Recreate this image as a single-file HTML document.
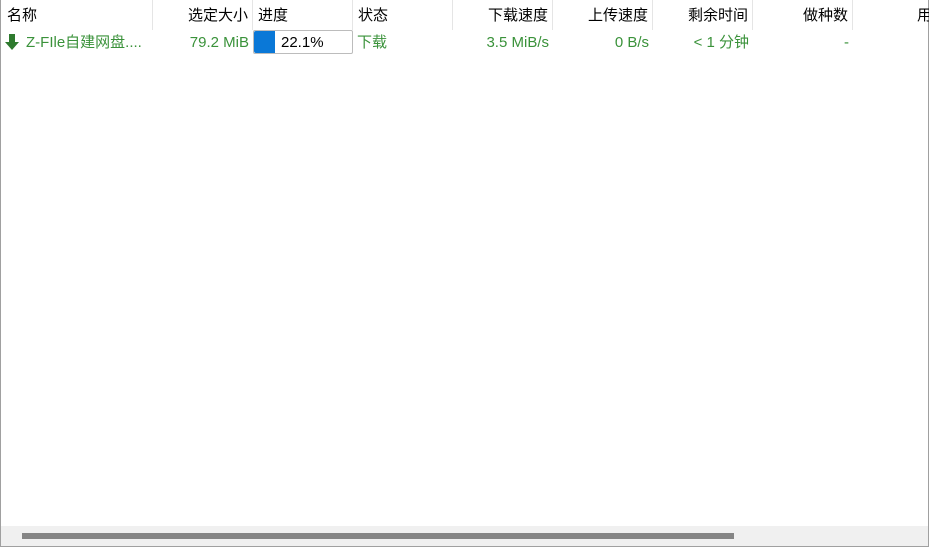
<!DOCTYPE html>
<html><head><meta charset="utf-8"><style>
*{margin:0;padding:0;box-sizing:border-box}
body{width:929px;height:547px;background:#fff;position:relative;overflow:hidden;font-family:"Liberation Sans","Noto Sans CJK SC",sans-serif;font-size:15px;line-height:18px}
.frame{position:absolute;left:0;top:0;width:929px;height:547px;border:1px solid #a0a0a0;border-top:none}
.h{position:absolute;top:7px;color:#000;white-space:nowrap}
.sep{position:absolute;top:0;width:1px;height:30px;background:#e5e5e5}
.g{position:absolute;top:34px;color:#3a923a;white-space:nowrap}
.r{text-align:right}
</style></head><body>
<div class="frame"></div>
<div class="sep" style="left:152px"></div><div class="sep" style="left:252px"></div><div class="sep" style="left:352px"></div><div class="sep" style="left:452px"></div><div class="sep" style="left:552px"></div><div class="sep" style="left:652px"></div><div class="sep" style="left:752px"></div><div class="sep" style="left:852px"></div>
<div class="h" style="left:7px">名称</div>
<div class="h r" style="left:152px;width:96px">选定大小</div>
<div class="h" style="left:258px">进度</div>
<div class="h" style="left:358px">状态</div>
<div class="h r" style="left:452px;width:96px">下载速度</div>
<div class="h r" style="left:552px;width:96px">上传速度</div>
<div class="h r" style="left:652px;width:96px">剩余时间</div>
<div class="h r" style="left:752px;width:96px">做种数</div>
<div class="h" style="left:917px">用</div>
<svg style="position:absolute;left:4px;top:33px" width="16" height="18" viewBox="0 0 16 18"><path d="M5 1h6v8h4l-7 8-7-8h4z" fill="#2e7a2e"/></svg>
<div class="g" style="left:26px">Z-FIle自建网盘....</div>
<div class="g r" style="left:152px;width:97px">79.2 MiB</div>
<div style="position:absolute;left:253px;top:30px;width:100px;height:24px;border:1px solid #bcbcbc;border-radius:2px;background:#fff"></div>
<div style="position:absolute;left:254px;top:31px;width:21px;height:22px;background:#0a78d7;border-radius:2px 0 0 2px"></div>
<div style="position:absolute;left:281px;top:34px;color:#000">22.1%</div>
<div class="g" style="left:357px">下载</div>
<div class="g r" style="left:452px;width:97px">3.5 MiB/s</div>
<div class="g r" style="left:552px;width:97px">0 B/s</div>
<div class="g r" style="left:652px;width:97px">&lt; 1 分钟</div>
<div class="g r" style="left:752px;width:97px">-</div>
<div style="position:absolute;left:1px;top:526px;width:927px;height:20px;background:#f0f0f0"></div>
<div style="position:absolute;left:22px;top:533px;width:712px;height:6px;background:#858585"></div>
</body></html>
